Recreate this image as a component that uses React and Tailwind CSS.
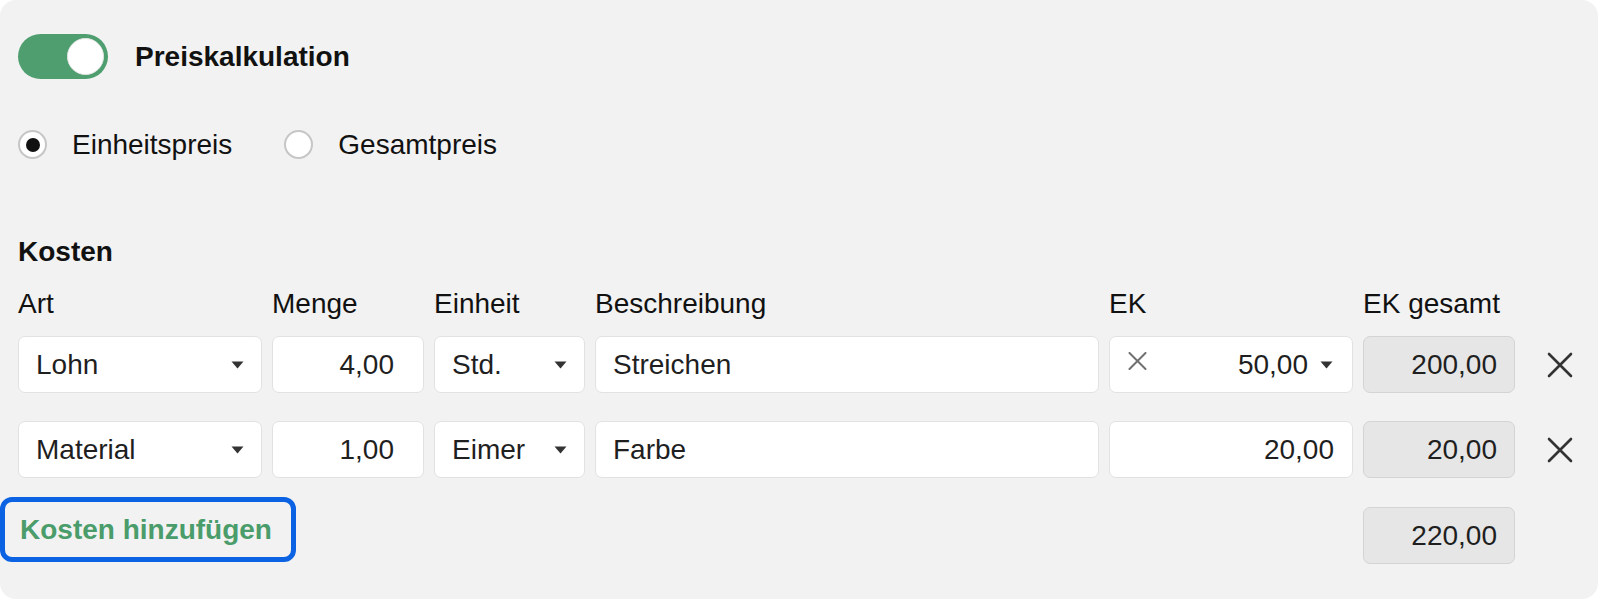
import React, { useState } from "react";

const font = { fontFamily: '"Liberation Sans", Arial, sans-serif' };

const Caret = () => (
  <svg width="13" height="8" viewBox="0 0 13 8" className="shrink-0">
    <path d="M0.5 0.5 L12.5 0.5 L6.5 7.5 Z" fill="#333" />
  </svg>
);

const RemoveIcon = () => (
  <svg width="26" height="26" viewBox="0 0 26 26">
    <path d="M2 2 L24 24 M24 2 L2 24" stroke="#333" strokeWidth="2.6" strokeLinecap="round" />
  </svg>
);

const ClearIcon = () => (
  <svg width="19" height="18" viewBox="0 0 19 18">
    <path d="M1.5 1 L17.5 17 M17.5 1 L1.5 17" stroke="#707070" strokeWidth="2" strokeLinecap="round" />
  </svg>
);

const Select = ({ value }) => (
  <div className="h-[57px] bg-white border border-[#e2e2e2] rounded-[7px] flex items-center justify-between pl-[17px] pr-[17px] text-[28px] text-[#1f1f1f]">
    <span>{value}</span>
    <Caret />
  </div>
);

const NumberBox = ({ value, pr = "pr-[18px]" }) => (
  <div className={`h-[57px] bg-white border border-[#e2e2e2] rounded-[7px] flex items-center justify-end ${pr} text-[28px] text-[#1f1f1f]`}>
    {value}
  </div>
);

const TextBox = ({ value }) => (
  <div className="h-[57px] bg-white border border-[#e2e2e2] rounded-[7px] flex items-center pl-[17px] text-[28px] text-[#1f1f1f]">
    {value}
  </div>
);

const ReadOnlyBox = ({ value }) => (
  <div className="h-[57px] bg-[#e6e6e6] border border-[#d4d4d4] rounded-[7px] flex items-center justify-end pr-[17px] text-[28px] text-[#1f1f1f]">
    {value}
  </div>
);

const Radio = ({ checked, label, onClick }) => (
  <button onClick={onClick} className="flex items-center gap-[25px]">
    <span className="w-[29px] h-[29px] rounded-full bg-white border-2 border-[#c6c6c6] flex items-center justify-center">
      {checked && <span className="w-[14px] h-[14px] rounded-full bg-[#111]" />}
    </span>
    <span className="text-[28px] text-[#111]">{label}</span>
  </button>
);

const rows = [
  { art: "Lohn", menge: "4,00", einheit: "Std.", text: "Streichen", ek: "50,00", total: "200,00", dropdown: true },
  { art: "Material", menge: "1,00", einheit: "Eimer", text: "Farbe", ek: "20,00", total: "20,00", dropdown: false },
];

const grid = "grid grid-cols-[244px_152px_151px_504px_244px_152px_1fr] gap-x-[10px]";

export default function App() {
  const [enabled, setEnabled] = useState(true);
  const [mode, setMode] = useState("einheit");

  return (
    <div className="bg-white w-[1600px] h-[601px]" style={font}>
      <div className="w-[1598px] h-[599px] bg-[#f2f2f2] rounded-[16px] px-[18px] pt-[34px]">
        {/* Toggle */}
        <div className="flex items-center gap-[27px]">
          <button
            onClick={() => setEnabled(!enabled)}
            className={`w-[90px] h-[45px] rounded-full flex items-center px-[4px] ${enabled ? "bg-[#4e9e6f] justify-end" : "bg-[#ccc] justify-start"}`}
          >
            <span className="w-[37px] h-[37px] rounded-full bg-white border border-[#e6e6e6]" />
          </button>
          <span className="text-[28px] font-bold text-[#111]">Preiskalkulation</span>
        </div>

        {/* Radios */}
        <div className="flex items-center gap-[52px] mt-[51px] h-[29px]">
          <Radio checked={mode === "einheit"} label="Einheitspreis" onClick={() => setMode("einheit")} />
          <Radio checked={mode === "gesamt"} label="Gesamtpreis" onClick={() => setMode("gesamt")} />
        </div>

        <div className="mt-[77px] text-[28px] font-bold text-[#111] leading-[32px]">Kosten</div>

        {/* Headers */}
        <div className={`${grid} mt-[20px] text-[28px] text-[#111] leading-[32px]`}>
          <div>Art</div>
          <div>Menge</div>
          <div>Einheit</div>
          <div>Beschreibung</div>
          <div>EK</div>
          <div>EK gesamt</div>
          <div />
        </div>

        {/* Rows */}
        <div className="mt-[16px] flex flex-col gap-[28px]">
          {rows.map((r) => (
            <div key={r.art} className={grid}>
              <Select value={r.art} />
              <NumberBox value={r.menge} pr="pr-[29px]" />
              <Select value={r.einheit} />
              <TextBox value={r.text} />
              {r.dropdown ? (
                <div className="h-[57px] bg-white border border-[#e2e2e2] rounded-[7px] flex items-center pl-[18px] pr-[19px] text-[28px] text-[#1f1f1f]">
                  <span className="-mt-[8px]">
                    <ClearIcon />
                  </span>
                  <span className="ml-auto mr-[12px]">{r.ek}</span>
                  <Caret />
                </div>
              ) : (
                <NumberBox value={r.ek} />
              )}
              <ReadOnlyBox value={r.total} />
              <div className="flex items-center pl-[22px]">
                <RemoveIcon />
              </div>
            </div>
          ))}
        </div>

        {/* Footer */}
        <div className={`${grid} mt-[19px]`}>
          <div className="col-span-3 -ml-[18px] self-start">
            <button className="h-[65px] border-[5px] border-[#0b63e3] rounded-[12px] pl-[15px] pr-[19px] text-[28px] font-bold text-[#4a9d6b]">
              Kosten hinzufügen
            </button>
          </div>
          <div />
          <div />
          <div className="mt-[10px]">
            <ReadOnlyBox value="220,00" />
          </div>
          <div />
        </div>
      </div>
    </div>
  );
}
